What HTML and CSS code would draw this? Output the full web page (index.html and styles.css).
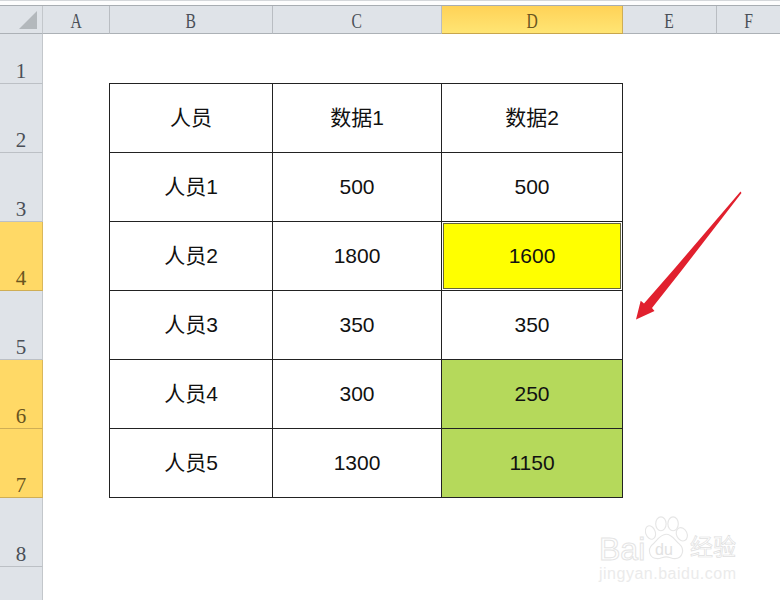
FILE: index.html
```html
<!DOCTYPE html>
<html lang="zh">
<head>
<meta charset="utf-8">
<title>Sheet</title>
<link rel="stylesheet" href="styles.css">
</head>
<body>
<div class="app">
  <div class="strip"></div>
  <div class="sheet">
    <div class="corner">
      <svg class="corner-icon" width="20" height="20" viewBox="0 0 20 20"><polygon points="1,19 19,19 19,1" fill="#b3b8bc"/></svg>
    </div>
    <div class="col"><span class="col-name">A</span></div>
    <div class="col"><span class="col-name">B</span></div>
    <div class="col"><span class="col-name">C</span></div>
    <div class="col col-on"><span class="col-name">D</span></div>
    <div class="col"><span class="col-name">E</span></div>
    <div class="col col-last"><span class="col-name">F</span></div>

    <div class="rows">
      <div class="row">1</div>
      <div class="row">2</div>
      <div class="row">3</div>
      <div class="row row-on">4</div>
      <div class="row">5</div>
      <div class="row row-on">6</div>
      <div class="row row-on">7</div>
      <div class="row">8</div>
      <div class="row row-last"></div>
    </div>

    <div class="data">
      <div class="cell">人员</div><div class="cell">数据1</div><div class="cell">数据2</div>
      <div class="cell">人员1</div><div class="cell">500</div><div class="cell">500</div>
      <div class="cell">人员2</div><div class="cell">1800</div><div class="cell cell-picked"><span class="picked-fill">1600</span></div>
      <div class="cell">人员3</div><div class="cell">350</div><div class="cell">350</div>
      <div class="cell">人员4</div><div class="cell">300</div><div class="cell cell-green">250</div>
      <div class="cell">人员5</div><div class="cell">1300</div><div class="cell cell-green">1150</div>
    </div>
  </div>

  <svg class="arrow" width="780" height="600" viewBox="0 0 780 600">
    <polygon points="740.5,191.5 741.5,193 682,270 652,308 654.5,311 636,319.5 640.7,300.7 644,303.5 675,268" fill="#e1202e"/>
  </svg>

  <div class="mark">
    <svg class="paw" width="44" height="47" viewBox="0 0 50 54" fill="#fff" stroke="#e6e6e6" stroke-width="1.3">
      <ellipse cx="6" cy="19" rx="5.5" ry="8" transform="rotate(-20 6 19)"/>
      <ellipse cx="18" cy="9" rx="6" ry="8"/>
      <ellipse cx="32" cy="9" rx="6" ry="8"/>
      <ellipse cx="42" cy="21" rx="6" ry="8" transform="rotate(-25 42 21)"/>
      <path d="M24 21c7 0 10 7 15 11 7 6 4 17-5 17-4 0-6-2-10-2s-6 2-10 2c-9 0-12-10-6-16 5-4 9-12 16-12z"/>
    </svg>
    <span class="mark-bai">Bai</span>
    <span class="mark-du">du</span>
    <span class="mark-cn">经验</span>
    <span class="mark-url">jingyan.baidu.com</span>
  </div>
</div>
</body>
</html>
```
FILE: styles.css
```css
html, body {
  margin: 0;
  padding: 0;
  background: #fff;
}

.app {
  position: relative;
  width: 780px;
  height: 600px;
  overflow: hidden;
  font-family: "Liberation Sans", "Noto Sans CJK SC", sans-serif;
}

.strip {
  height: 6px;
  box-sizing: border-box;
  border-top: 1px solid #d4d7da;
  border-bottom: 1px solid #a8adb2;
  background: #fdfdfd;
}

.sheet {
  display: grid;
  grid-template-columns: 43px 67px 163px 169px 181px 94px 63px;
  grid-template-rows: 28px 50px repeat(6, 69px) 69px 34px;
  height: 594px;
}

.corner,
.col {
  background: #dfe3e8;
  border-right: 1px solid #b9bdc2;
  border-bottom: 1px solid #acb1b6;
  box-sizing: border-box;
}

.corner {
  display: flex;
  align-items: flex-end;
  justify-content: flex-end;
  padding: 0 4px 3px 0;
  border-right-color: #c3c7cb;
}

.col {
  display: flex;
  align-items: center;
  justify-content: center;
  padding-top: 2px;
  font-family: "Liberation Serif", serif;
  font-size: 20px;
  line-height: 22px;
  color: #4a4f57;
}

.col-name {
  display: inline-block;
  transform: scaleX(0.78);
}

.col-on {
  background: linear-gradient(#ffd257, #ffe574);
  border-right-color: #cfae55;
  border-bottom-color: #c8a64c;
  color: #6a5520;
}

.col-last {
  border-right: 0;
}

.rows {
  grid-column: 1;
  grid-row: 2 / 11;
  display: grid;
  grid-template-rows: subgrid;
}

.row {
  display: flex;
  align-items: flex-end;
  justify-content: center;
  box-sizing: border-box;
  padding-bottom: 0;
  background: #dfe3e8;
  border-right: 1px solid #c3c7cb;
  border-bottom: 1px solid #bcc0c5;
  font-family: "Liberation Serif", serif;
  font-size: 21px;
  line-height: 23px;
  color: #4a4f57;
}

.row-on {
  background: #ffd966;
  border-right-color: #d9b75c;
  border-bottom-color: #cfae55;
  color: #6a5520;
}

.row-last {
  border-bottom: 0;
}

.data {
  grid-column: 3 / 6;
  grid-row: 3 / 9;
  margin: -1px 0 0 -1px;
  display: grid;
  grid-template-columns: 163px 169px 181px;
  grid-auto-rows: 69px;
  border-left: 1px solid #222;
  border-top: 1px solid #222;
}

.cell {
  display: flex;
  align-items: center;
  justify-content: center;
  box-sizing: border-box;
  border-right: 1px solid #222;
  border-bottom: 1px solid #222;
  font-size: 21px;
  line-height: 24px;
  color: #111;
}

.cell-picked {
  padding: 1px;
}

.picked-fill {
  flex: 1;
  align-self: stretch;
  display: flex;
  align-items: center;
  justify-content: center;
  background: #ffff00;
  border: 1px solid #66663a;
}

.cell-green {
  background: #b5d95b;
}

.arrow {
  position: absolute;
  left: 0;
  top: 0;
  pointer-events: none;
}

.mark {
  position: absolute;
  left: 598px;
  top: 516px;
  width: 150px;
  height: 70px;
  color: #ececec;
}

.paw {
  position: absolute;
  left: 47px;
  top: 0;
}

.mark-bai,
.mark-du,
.mark-cn,
.mark-url {
  position: absolute;
  line-height: 1;
}

.mark-bai {
  left: 1px;
  top: 17px;
  font-size: 32px;
  color: #fff;
  -webkit-text-stroke: 1px #e4e4e4;
}

.mark-du {
  left: 57px;
  top: 26px;
  font-size: 16px;
  color: #e2e2e2;
}

.mark-cn {
  left: 92px;
  top: 20px;
  font-size: 23px;
  color: #fff;
  -webkit-text-stroke: 0.7px #e0e0e0;
}

.mark-url {
  left: 1px;
  top: 50px;
  font-size: 16px;
  letter-spacing: 0.5px;
  color: #ebebeb;
}
```
